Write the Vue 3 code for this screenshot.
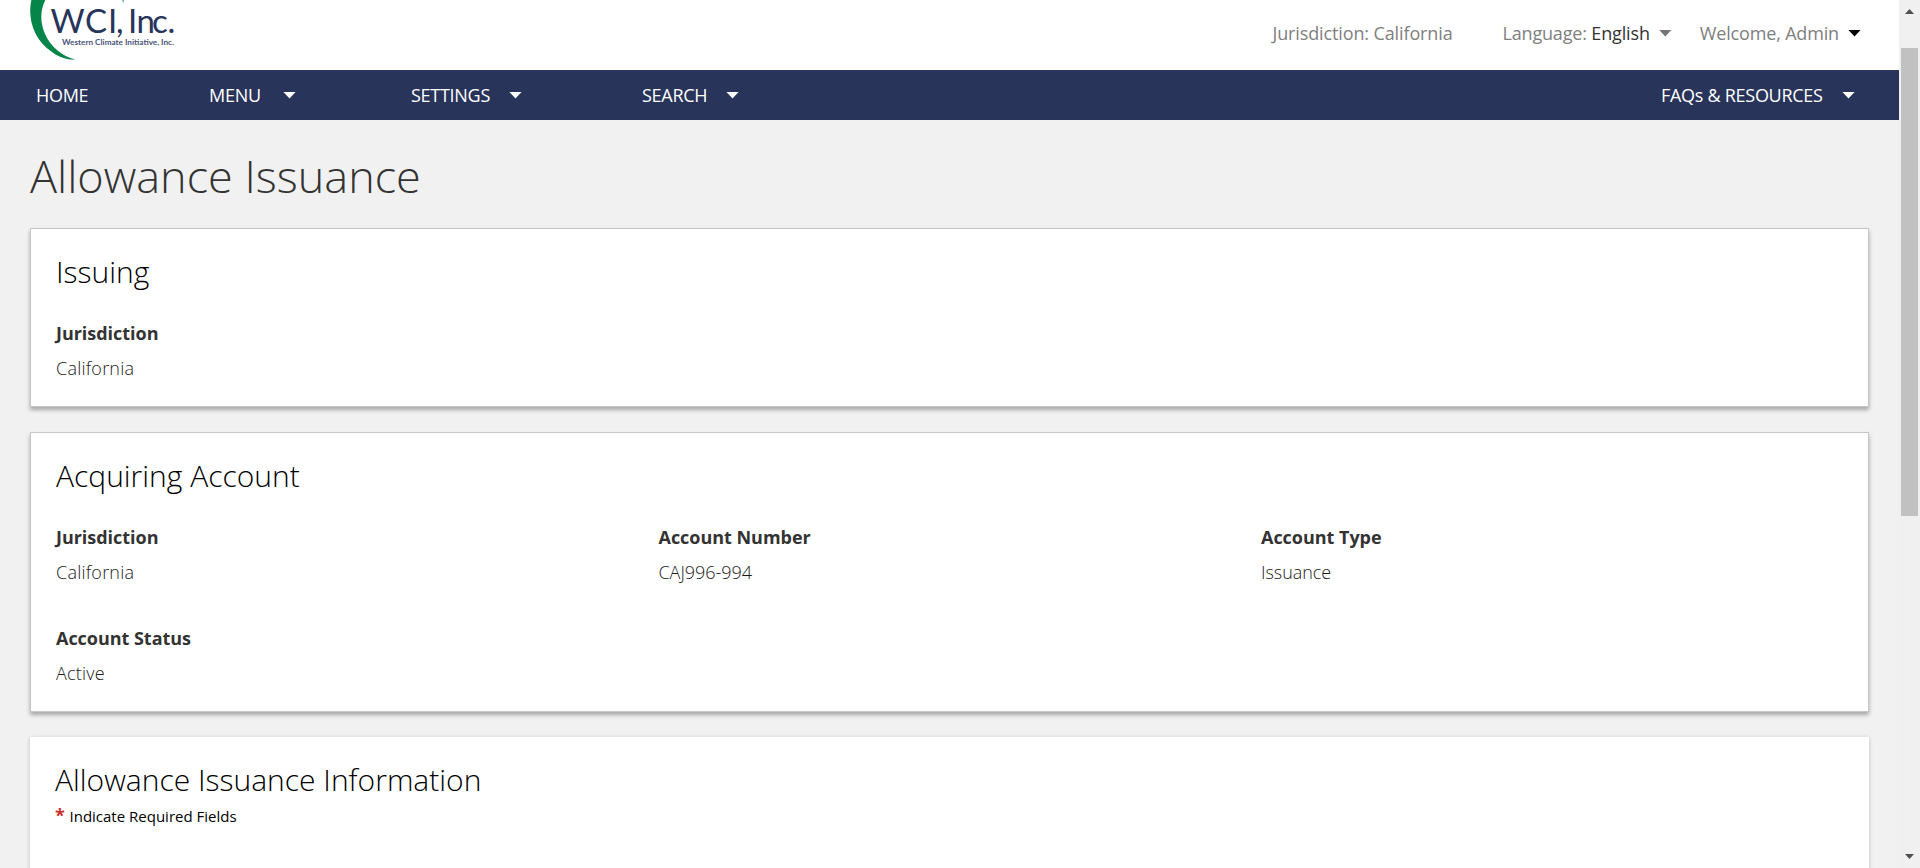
<script setup>
const navItems = [
  { label: 'HOME', cls: 'home', caret: false },
  { label: 'MENU', cls: 'menu', caret: true },
  { label: 'SETTINGS', cls: 'settings', caret: true },
  { label: 'SEARCH', cls: 'search', caret: true },
  { label: 'FAQs & RESOURCES', cls: 'faqs', caret: true },
]

const account = [
  { label: 'Jurisdiction', value: 'California', wide: true },
  { label: 'Account Number', value: 'CAJ996-994' },
  { label: 'Account Type', value: 'Issuance' },
  { label: 'Account Status', value: 'Active', wide: true },
]
</script>

<template>
  <div class="window">
    <div class="page">
      <header class="top">
        <svg class="logo" width="160" height="64" viewBox="0 0 160 64">
          <path d="M14 -8 C6 10 10 38 32 52 C40 58 48 60 55.500 59.500 C44 57 31 48 25 34 C19 20 20 6 30 -8 Z" fill="#06854a" />
          <path d="M102 0 L104 0 L103.500 3 Z" fill="#5fae95" />
          <text x="30.500 65 88 96 103 108 116.500 132 147.500" y="33" class="logo-name">WCI, Inc.</text>
          <text x="42" y="45" class="logo-sub" textLength="112" lengthAdjust="spacingAndGlyphs">Western Climate Initiative, Inc.</text>
        </svg>
        <div class="tools">
          <span class="jurisdiction">Jurisdiction: California</span>
          <span class="language">Language: <b>English</b></span>
          <i class="caret grey"></i>
          <span class="welcome">Welcome, Admin</span>
          <i class="caret black"></i>
        </div>
      </header>

      <nav class="nav">
        <a v-for="n in navItems" :key="n.label" class="nav-item" :class="n.cls">
          <span class="nav-label">{{ n.label }}</span><i v-if="n.caret" class="caret"></i>
        </a>
      </nav>

      <main class="content">
        <h1>Allowance Issuance</h1>
        <section class="card issuing">
          <h2>Issuing</h2>
          <dl class="fields">
            <div class="field"><dt>Jurisdiction</dt><dd class="wide">California</dd></div>
          </dl>
        </section>
        <section class="card acquiring">
          <h2>Acquiring Account</h2>
          <dl class="fields">
            <div v-for="f in account" :key="f.label" class="field">
              <dt>{{ f.label }}</dt>
              <dd :class="{ wide: f.wide }">{{ f.value }}</dd>
            </div>
          </dl>
        </section>
        <section class="card info">
          <h2>Allowance Issuance Information</h2>
          <p class="required"><span class="star">*</span><span>Indicate Required Fields</span></p>
        </section>
      </main>
    </div>

    <div class="scrollbar">
      <svg width="21" height="48" viewBox="0 0 21 48"><path d="M6 14 L10.500 9 L15 14 Z" fill="#505050" /></svg>
      <div class="thumb"></div>
      <svg class="down" width="21" height="20" viewBox="0 0 21 20"><path d="M6 6 H15 L10.500 11 Z" fill="#505050" /></svg>
    </div>
  </div>
</template>

<style>
body {
  overflow: hidden;
}
</style>

<style scoped>
.window {
  display: flex;
  width: 1920px;
  height: 868px;
  overflow: hidden;
  background: #f1f1f1;
  font-family: "Open Sans", sans-serif;
  font-size: 18px;
  color: #333;
}
.page {
  width: 1899px;
  height: 868px;
  overflow: hidden;
}
.top {
  display: flex;
  justify-content: space-between;
  height: 70px;
  background: #fff;
}
.logo {
  margin-left: 20px;
  flex: none;
}
.logo-name {
  font-family: Lato, sans-serif;
  font-size: 33px;
  fill: #29345a;
}
.logo-sub {
  font-family: Lato, sans-serif;
  font-size: 8px;
  font-weight: 700;
  fill: #4a547c;
}
.tools {
  display: flex;
  align-items: center;
  height: 66px;
  padding-right: 38px;
  font-weight: 400;
  letter-spacing: -0.16px;
  color: #808080;
  white-space: nowrap;
}
.jurisdiction {
  width: 230px;
  letter-spacing: -0.12px;
}
.language b {
  font-weight: 400;
  color: #333;
}
.caret {
  flex: none;
  width: 13px;
  height: 7px;
  background: #fff;
  clip-path: polygon(0 0, 100% 0, 50% 100%);
}
.caret.grey {
  background: #757575;
  margin: 0 28px 0 9px;
}
.caret.black {
  background: #000;
  margin-left: 9px;
}
.nav {
  display: flex;
  height: 50px;
  background: #29345a;
  color: #fff;
  padding-left: 36px;
  letter-spacing: -0.28px;
}
.nav-item {
  display: flex;
  align-items: center;
  white-space: nowrap;
}
.nav-item .caret {
  margin-left: auto;
}
.home {
  width: 173px;
}
.menu {
  width: 87px;
  margin-right: 115px;
}
.settings {
  width: 111px;
  margin-right: 120px;
}
.search {
  width: 97px;
}
.faqs {
  width: 194px;
  margin-left: auto;
  margin-right: 44px;
}
.content {
  padding: 0 30px;
}
h1 {
  height: 108px;
  margin: 0;
  line-height: 112px;
  font-size: 45px;
  font-weight: 300;
  color: #333;
}
.card {
  box-sizing: border-box;
  padding: 23px 25px 0;
  margin-bottom: 25px;
  border: 1px solid #c6c6c6;
  background: #fff;
  box-shadow: 0 3px 4px rgba(0, 0, 0, 0.3);
}
.issuing {
  height: 179px;
}
.acquiring {
  height: 280px;
}
.info {
  height: 200px;
  border: 0;
  box-shadow: 0 1px 4px rgba(0, 0, 0, 0.22);
}
h2 {
  margin: 0;
  height: 40px;
  line-height: 40px;
  font-size: 30px;
  font-weight: 300;
  color: #000;
}
.fields {
  display: grid;
  grid-template-columns: repeat(3, 602.500px);
  row-gap: 31px;
  margin: 24px 0 0;
}
.field {
  height: 70px;
}
dt {
  height: 35px;
  line-height: 35px;
  font-weight: 700;
  letter-spacing: -0.03px;
}
dd {
  margin: 0;
  height: 35px;
  line-height: 35px;
  font-weight: 300;
  letter-spacing: -0.05px;
  color: #1c1c1c;
}
dd.wide {
  letter-spacing: 0.22px;
}
.required {
  display: flex;
  margin: 5px 0 0;
  height: 22px;
  line-height: 22px;
  font-size: 15px;
  color: #000;
}
.star {
  width: 14.5px;
  line-height: 20px;
  color: #c9302c;
  font-size: 18px;
  font-weight: 700;
}
.scrollbar {
  display: flex;
  flex-direction: column;
  width: 21px;
  height: 868px;
  background: #f0f0f0;
}
.thumb {
  width: 17px;
  height: 468px;
  margin-left: 2px;
  background: #c1c1c1;
}
.down {
  margin-top: auto;
}
</style>
